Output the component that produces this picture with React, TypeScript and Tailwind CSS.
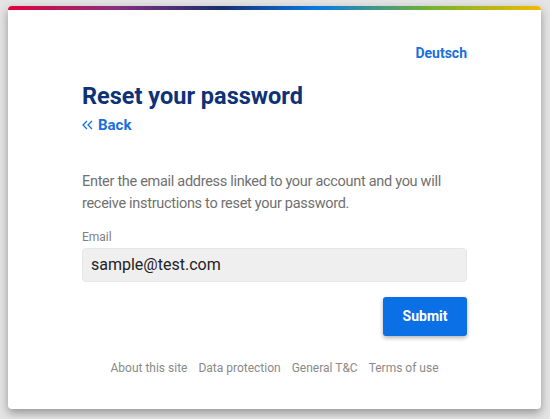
export default function App() {
  const links = ["About this site", "Data protection", "General T&C", "Terms of use"];

  return (
    <div className="w-[550px] h-[419px] bg-[#e4e4e4] pt-[6px] pl-[8px] font-['Roboto',sans-serif]">
      <div className="w-[533px] h-[403px] bg-white rounded-[4px] overflow-hidden shadow-[0_4px_10px_rgba(0,0,0,0.35)]">
        {/* Brand bar */}
        <div className="h-[4px] bg-[linear-gradient(90deg,#e2003c_0%,#8a2f7e_20%,#16306f_40%,#0b78e3_58%,#76b52a_80%,#f6b800_100%)]" />

        <div className="px-[74px] pt-[33px]">
          <div className="flex justify-end">
            <a className="text-[14px] leading-[20px] font-bold text-[#1a6fdc]">Deutsch</a>
          </div>

          <h1 className="mt-[19px] text-[23.5px] leading-[28px] font-bold text-[#0e3278]">
            Reset your password
          </h1>
          <a className="mt-[5px] flex items-center gap-[5px] text-[15px] leading-[20px] font-bold text-[#1a6fdc]">
            <svg width="11" height="10" viewBox="0 0 11 10" fill="none" stroke="currentColor" strokeWidth="1.3">
              <path d="M5 1L1 5l4 4M10 1L6 5l4 4" />
            </svg>
            Back
          </a>

          <p className="mt-[36px] text-[14.5px] tracking-[-0.3px] leading-[22px] text-[#707070]">
            Enter the email address linked to your account and you will receive instructions to reset your password.
          </p>

          <label className="block mt-[14px] text-[12px] leading-[16px] text-[#808080]">Email</label>
          <div className="mt-[3px] h-[34px] rounded-[4px] bg-[#efefef] border border-[#e6e6e6] flex items-center px-[8px] text-[16px] text-[#222]">
            sample@test.com
          </div>

          <div className="flex justify-end mt-[15px]">
            <button className="w-[84px] h-[39px] rounded-[3px] bg-[#0b6fe5] text-white text-[14px] font-bold shadow-[0_2px_4px_rgba(0,0,0,0.3)]">
              Submit
            </button>
          </div>
        </div>

        <div className="mt-[24px] flex justify-center gap-[11px] text-[12px] leading-[16px] text-[#8a8a8a]">
          {links.map((l) => (
            <a key={l}>{l}</a>
          ))}
        </div>
      </div>
    </div>
  );
}
